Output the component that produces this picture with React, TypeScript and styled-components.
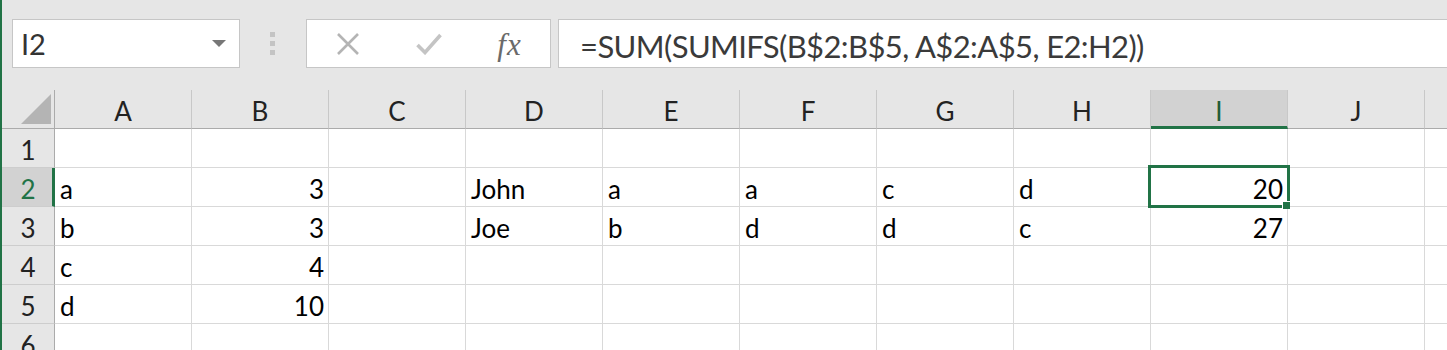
import React from "react";
import styled, { createGlobalStyle, css } from "styled-components";

const GlobalStyle = createGlobalStyle`
  html, body {
    margin: 0;
    padding: 0;
    background: #e6e6e6;
    overflow: hidden;
  }
  body {
    font-family: Lato, "Open Sans", sans-serif;
  }
`;

const Window = styled.div`
  width: 1447px;
  height: 350px;
  overflow: hidden;
  box-sizing: border-box;
  border-left: 2px solid #217346;
  background: #e6e6e6;
  display: flex;
  flex-direction: column;
`;

const FormulaBar = styled.div`
  height: 90px;
  flex: none;
  box-sizing: border-box;
  padding: 19px 0 0 10px;
  display: flex;
  align-items: flex-start;
`;

const NameBox = styled.div`
  width: 228px;
  height: 49px;
  box-sizing: border-box;
  background: #fff;
  border: 1px solid #c6c6c6;
  display: flex;
  align-items: center;
  justify-content: space-between;
  padding: 0 13px 0 8px;
  font-size: 29px;
  color: #333;
`;

const DropArrow = styled.span`
  width: 0;
  height: 0;
  border-left: 7px solid transparent;
  border-right: 7px solid transparent;
  border-top: 7px solid #777;
`;

const Grip = styled.div`
  width: 5px;
  margin: 13px 31px 0 30px;
  display: flex;
  flex-direction: column;
  gap: 4px;
`;

const GripDot = styled.span`
  width: 5px;
  height: 5px;
  background: #c4c4c4;
`;

const ButtonBox = styled.div`
  width: 245px;
  height: 49px;
  box-sizing: border-box;
  background: #fff;
  border: 1px solid #c6c6c6;
  display: flex;
  align-items: center;
`;

const IconSlot = styled.div`
  flex: 1;
  display: flex;
  align-items: center;
  justify-content: center;
`;

const FxLabel = styled.span`
  font-family: "Liberation Serif", serif;
  font-style: italic;
  font-size: 31px;
  color: #6a6a6a;
  letter-spacing: 1px;
  margin-top: 2px;
`;

const FormulaInput = styled.div`
  flex: 1;
  margin-left: 7px;
  margin-right: -20px;
  height: 49px;
  box-sizing: border-box;
  background: #fff;
  border: 1px solid #c6c6c6;
  display: flex;
  align-items: center;
  padding: 5px 0 0 21px;
  font-size: 31px;
  letter-spacing: -0.6px;
  color: #3a3a3a;
  white-space: nowrap;
`;

const Sheet = styled.div`
  display: grid;
  grid-template-columns: 53px repeat(11, 137px);
  grid-auto-rows: 39px;
  background: #fff;
`;

const headerBase = css`
  box-sizing: border-box;
  background: #e6e6e6;
  display: flex;
  align-items: center;
  justify-content: center;
  font-size: 26px;
  color: #222;
  padding-top: 4px;
`;

const Corner = styled.div`
  ${headerBase};
  border-right: 1px solid #ababab;
  border-bottom: 1px solid #ababab;
  justify-content: flex-start;
  align-items: flex-start;
  padding: 4px 0 0 19px;
`;

const ColHeader = styled.div<{ $active?: boolean }>`
  ${headerBase};
  border-right: 1px solid #c8c8c8;
  border-bottom: 1px solid #ababab;
  ${(p) =>
    p.$active &&
    css`
      background: #d2d2d2;
      color: #1f5c36;
      border-bottom: 3px solid #217346;
      padding-top: 6px;
    `}
`;

const RowHeader = styled.div<{ $active?: boolean }>`
  ${headerBase};
  border-right: 1px solid #ababab;
  border-bottom: 1px solid #cdcdcd;
  ${(p) =>
    p.$active &&
    css`
      background: #d2d2d2;
      color: #217346;
      border-right: 3px solid #217346;
      padding-left: 2px;
    `}
`;

const Cell = styled.div<{ $num?: boolean; $selected?: boolean }>`
  box-sizing: border-box;
  border-right: 1px solid #d9d9d9;
  border-bottom: 1px solid #d9d9d9;
  display: flex;
  align-items: center;
  justify-content: ${(p) => (p.$num ? "flex-end" : "flex-start")};
  padding: 4px 4px 0 5px;
  font-size: 26px;
  color: #000;
  white-space: nowrap;
  ${(p) =>
    p.$selected &&
    css`
      position: relative;
    `}
`;

const SelectionFrame = styled.div`
  position: absolute;
  left: -3px;
  top: -3px;
  right: -3px;
  bottom: -2px;
  border: 3px solid #217346;
  z-index: 2;
  pointer-events: none;
`;

const FillHandle = styled.div`
  position: absolute;
  right: -3px;
  bottom: -3px;
  width: 7px;
  height: 7px;
  background: #217346;
  border-left: 1px solid #fff;
  border-top: 1px solid #fff;
  z-index: 3;
`;

// The last column (K) only shows a sliver at the right edge; its letter lies off-screen.
const columns = ["A", "B", "C", "D", "E", "F", "G", "H", "I", "J", ""];

type Value = string | number | undefined;
const data: Record<number, Value[]> = {
  1: [],
  2: ["a", 3, undefined, "John", "a", "a", "c", "d", 20],
  3: ["b", 3, undefined, "Joe", "b", "d", "d", "c", 27],
  4: ["c", 4],
  5: ["d", 10],
  6: [],
};

const XIcon = () => (
  <svg width="24" height="24" viewBox="0 0 24 24">
    <path d="M2 2 L22 22 M22 2 L2 22" stroke="#b4b4b4" strokeWidth="2.6" fill="none" />
  </svg>
);

const CheckIcon = () => (
  <svg width="26" height="22" viewBox="0 0 26 22">
    <path d="M1.5 12 L9 19.5 L24.5 2" stroke="#c4c4c4" strokeWidth="3.6" fill="none" />
  </svg>
);

const CornerTriangle = () => (
  <svg width="31" height="31" viewBox="0 0 31 31">
    <polygon points="0,30 30,30 30,0" fill="#b4b4b4" />
  </svg>
);

export default function App() {
  const selectedRow = 2;
  const selectedCol = 8;
  return (
    <>
      <GlobalStyle />
      <Window>
        <FormulaBar>
          <NameBox>
            <span>I2</span>
            <DropArrow />
          </NameBox>
          <Grip>
            <GripDot />
            <GripDot />
            <GripDot />
          </Grip>
          <ButtonBox>
            <IconSlot>
              <XIcon />
            </IconSlot>
            <IconSlot>
              <CheckIcon />
            </IconSlot>
            <IconSlot>
              <FxLabel>fx</FxLabel>
            </IconSlot>
          </ButtonBox>
          <FormulaInput>=SUM(SUMIFS(B$2:B$5, A$2:A$5, E2:H2))</FormulaInput>
        </FormulaBar>
        <Sheet>
          <Corner>
            <CornerTriangle />
          </Corner>
          {columns.map((c, i) => (
            <ColHeader key={i} $active={i === selectedCol}>
              {c}
            </ColHeader>
          ))}
          {[1, 2, 3, 4, 5, 6].map((r) => (
            <React.Fragment key={r}>
              <RowHeader $active={r === selectedRow}>{r}</RowHeader>
              {columns.map((c, i) => {
                const v = data[r][i];
                const sel = r === selectedRow && i === selectedCol;
                return (
                  <Cell key={i} $num={typeof v === "number"} $selected={sel}>
                    {v}
                    {sel && (
                      <>
                        <SelectionFrame />
                        <FillHandle />
                      </>
                    )}
                  </Cell>
                );
              })}
            </React.Fragment>
          ))}
        </Sheet>
      </Window>
    </>
  );
}
